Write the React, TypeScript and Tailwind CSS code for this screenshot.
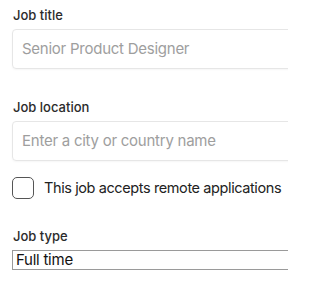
export default function App() {
  return (
    <div className="w-[288px] h-[288px] overflow-hidden bg-white" style={{ fontFamily: 'Inter, "Liberation Sans", sans-serif' }}>
      <div className="w-[320px] pl-3 pt-[5px]">
        <div className="text-[13px] leading-5 font-medium text-[#2b2b2b] pl-px mb-1">Job title</div>
        <div className="h-10 rounded-[4px] border border-[#e6e6e6] shadow-[0_1px_2px_rgba(0,0,0,0.04)] flex items-center pl-[9px] text-[15px] tracking-[-0.25px] text-[#9e9e9e]">
          Senior Product Designer
        </div>
        <div className="text-[13px] leading-5 font-medium text-[#2b2b2b] pl-px mt-[28px] mb-1">Job location</div>
        <div className="h-10 rounded-[4px] border border-[#e6e6e6] shadow-[0_1px_2px_rgba(0,0,0,0.04)] flex items-center pl-[9px] text-[15px] tracking-[-0.25px] text-[#9e9e9e]">
          Enter a city or country name
        </div>
        <div className="mt-4 flex items-center gap-[10px] h-[22px]">
          <div className="w-[22px] h-[22px] rounded-[5px] border-[1.5px] border-[#555] shrink-0" />
          <span className="text-[14.5px] tracking-[-0.4px] text-[#222] whitespace-nowrap">This job accepts remote applications</span>
        </div>
        <div className="text-[13px] leading-5 font-medium text-[#2b2b2b] pl-px mt-[27px] mb-1">Job type</div>
        <div className="h-5 border border-[#9a9a9a] flex items-center pl-[3px] text-[15px] tracking-[-0.25px] text-[#111]">
          Full time
        </div>
      </div>
    </div>
  );
}
